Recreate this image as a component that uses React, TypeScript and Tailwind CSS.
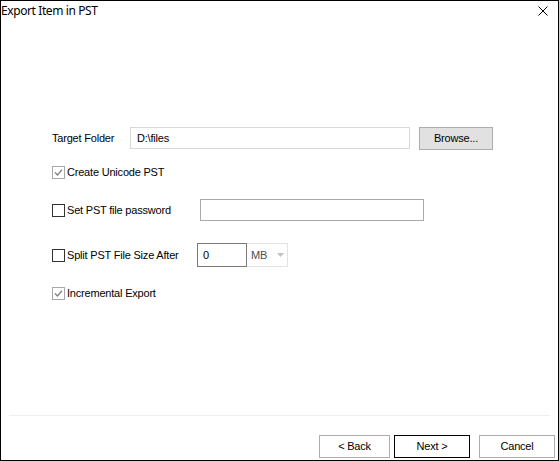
import React from "react";

function Check({ checked }: { checked: boolean }) {
  return (
    <span
      className={
        "w-[13px] h-[13px] shrink-0 border bg-white flex items-center justify-center " +
        (checked ? "border-[#a8a8a8]" : "border-[#333333]")
      }
    >
      {checked && (
        <svg width="9" height="9" viewBox="0 0 9 9">
          <path d="M1 4.5 L3.5 7 L8 1.8" fill="none" stroke="#808080" strokeWidth="1.3" />
        </svg>
      )}
    </span>
  );
}

function CheckRow({ checked, label }: { checked: boolean; label: string }) {
  return (
    <div className="flex items-center">
      <Check checked={checked} />
      <span className="ml-[2px] whitespace-nowrap">{label}</span>
    </div>
  );
}

export default function App() {
  return (
    <div
      className="w-[559px] h-[461px] border border-black bg-white flex flex-col text-black text-[11px] tracking-[-0.2px]"
      style={{ fontFamily: '"Liberation Sans", Arial, sans-serif' }}
    >
      <div className="h-[20px] flex items-start justify-between">
        <span
          className="mt-[2px] ml-0 text-[12px] leading-[16px] tracking-[-0.4px]"
          style={{ fontFamily: '"Segoe UI", "Noto Sans", "Open Sans", sans-serif' }}
        >
          Export Item in PST
        </span>
        <svg width="10" height="10" viewBox="0 0 10 10" className="mt-[5px] mr-[10px]">
          <path d="M0.5 0.5 L9.5 9.5 M9.5 0.5 L0.5 9.5" stroke="#000" strokeWidth="1" />
        </svg>
      </div>

      <div className="pl-[51px] flex flex-col">
        <div className="mt-[106px] h-[23px] flex items-center">
          <span className="w-[78px] whitespace-nowrap">Target Folder</span>
          <div className="w-[280px] h-[22px] self-start border border-[#d9d9d9] flex items-center pl-[6px]">
            D:\files
          </div>
          <button className="ml-[9px] w-[74px] h-[23px] border border-[#adadad] bg-[#e1e1e1] flex items-center justify-center">
            Browse...
          </button>
        </div>

        <div className="mt-[16px] h-[13px] flex items-center">
          <CheckRow checked={true} label="Create Unicode PST" />
        </div>

        <div className="mt-[20px] h-[22px] flex items-center">
          <div className="w-[148px]">
            <CheckRow checked={false} label="Set PST file password" />
          </div>
          <div className="w-[224px] h-[22px] border border-[#a9a9a9]" />
        </div>

        <div className="mt-[22px] h-[24px] flex items-center">
          <div className="w-[145px]">
            <CheckRow checked={false} label="Split PST File Size After" />
          </div>
          <div className="w-[50px] h-[24px] border border-[#7a7a7a] flex items-center pl-[5px]">0</div>
          <div className="w-[41px] h-[24px] border border-l-0 border-[#e3e3e3] flex items-center pl-[4px] text-[#4d4d4d]">
            <span>MB</span>
            <svg width="7" height="4" viewBox="0 0 7 4" className="ml-[10px]">
              <path d="M0 0 L7 0 L3.5 4 Z" fill="#c2c2c2" />
            </svg>
          </div>
        </div>

        <div className="mt-[20px] h-[13px] flex items-center">
          <CheckRow checked={true} label="Incremental Export" />
        </div>
      </div>

      <div className="flex-1" />

      <div className="mx-[8px] h-px bg-[#efefef]" />

      <div className="mt-[19px] mb-[2px] flex justify-end pr-[3px]">
        <button className="w-[71px] h-[23px] border border-[#adadad] bg-white flex items-center justify-center">
          &lt; Back
        </button>
        <button className="ml-[4px] w-[76px] h-[23px] border border-black bg-white flex items-center justify-center">
          Next &gt;
        </button>
        <button className="ml-[9px] w-[76px] h-[23px] border border-[#adadad] bg-white flex items-center justify-center">
          Cancel
        </button>
      </div>
    </div>
  );
}
